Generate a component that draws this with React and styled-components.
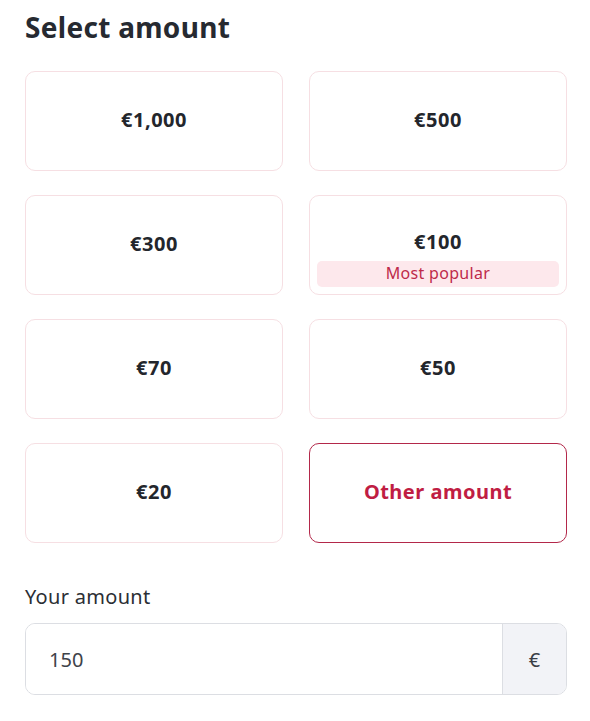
import React from "react";
import styled, { createGlobalStyle } from "styled-components";

const Global = createGlobalStyle`
  html, body { margin: 0; padding: 0; background: #fff; }
  body { font-family: "Noto Sans", "Open Sans", sans-serif; color: #22252b; }
  * { box-sizing: border-box; }
`;

const Page = styled.div`
  width: 590px;
  padding: 9px 23px 0 25px;
`;

const Title = styled.h2`
  margin: 0 0 26px;
  font-size: 28px;
  line-height: 36px;
  font-weight: 700;
  color: #262a31;
  letter-spacing: 0.3px;
`;

const Grid = styled.div`
  display: grid;
  grid-template-columns: 1fr 1fr;
  column-gap: 26px;
  row-gap: 24px;
`;

const Card = styled.button`
  position: relative;
  height: 100px;
  border-radius: 10px;
  border: ${(p) => (p.$selected ? "1.8px solid #b3284a" : "1.5px solid #f6dfe3")};
  background: #fff;
  font-family: inherit;
  font-size: 20px;
  font-weight: 700;
  letter-spacing: 0.5px;
  color: ${(p) => (p.$selected ? "#c01d43" : "#23262c")};
  display: flex;
  align-items: center;
  justify-content: center;
  padding: 0;
  cursor: pointer;
`;

const Amount = styled.span`
  margin-top: ${(p) => (p.$shift ? "-7px" : "-4px")};
`;

const Badge = styled.span`
  position: absolute;
  left: 7px;
  right: 7px;
  bottom: 7px;
  height: 26px;
  border-radius: 5px;
  background: #fde8ec;
  color: #be2a4a;
  font-size: 16px;
  font-weight: 400;
  letter-spacing: 0.3px;
  line-height: 25px;
  text-align: center;
`;

const Label = styled.div`
  margin-top: 41px;
  font-size: 20px;
  line-height: 26px;
  letter-spacing: 0.3px;
  color: #2b2e34;
`;

const InputGroup = styled.div`
  margin-top: 13px;
  display: flex;
  height: 72px;
  border: 1.5px solid #dcdee3;
  border-radius: 10px;
  overflow: hidden;
`;

const Input = styled.input`
  flex: 1;
  border: none;
  outline: none;
  padding: 0 0 0 23px;
  font-family: inherit;
  font-size: 20px;
  color: #3e4249;
  background: #fff;
`;

const Suffix = styled.div`
  width: 64px;
  border-left: 1.5px solid #dcdee3;
  background: #f2f3f7;
  display: flex;
  align-items: center;
  justify-content: center;
  font-size: 20px;
  color: #3a3e46;
`;

const options = [
  { label: "€1,000" },
  { label: "€500" },
  { label: "€300" },
  { label: "€100", badge: "Most popular" },
  { label: "€70" },
  { label: "€50" },
  { label: "€20" },
  { label: "Other amount", selected: true },
];

export default function App() {
  return (
    <>
      <Global />
      <Page>
        <Title>Select amount</Title>
        <Grid>
          {options.map((o) => (
            <Card key={o.label} $selected={o.selected}>
              <Amount $shift={!!o.badge}>{o.label}</Amount>
              {o.badge && <Badge>{o.badge}</Badge>}
            </Card>
          ))}
        </Grid>
        <Label>Your amount</Label>
        <InputGroup>
          <Input defaultValue="150" />
          <Suffix>€</Suffix>
        </InputGroup>
      </Page>
    </>
  );
}
